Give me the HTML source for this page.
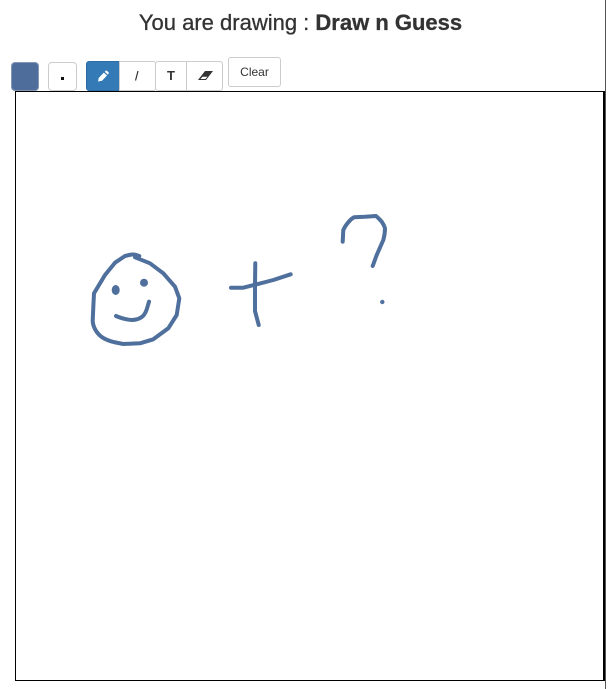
<!DOCTYPE html>
<html>
<head>
<meta charset="utf-8">
<style>
html,body{margin:0;padding:0;background:#fff}
body{position:relative;width:611px;height:689px;overflow:hidden;font-family:"Liberation Sans",sans-serif;color:#333}
h1{position:absolute;left:0;top:10px;width:601px;margin:0;text-align:center;font-size:22px;line-height:26px;font-weight:400;color:#333;white-space:nowrap;-webkit-text-stroke:0.3px #333}
.b{position:absolute;box-sizing:border-box;background:#fff;border:1px solid #ccc;text-align:center;font-size:12px;color:#333}
#canvas{position:absolute;left:15px;top:91px;width:590px;height:590px;box-sizing:border-box;border:1px solid #000;border-right-width:2px}
#edge{position:absolute;left:605px;top:0;width:1px;height:689px;background:#555}
svg{position:absolute;left:0;top:0}
</style>
</head>
<body>
<h1>You are drawing : <b>Draw n Guess</b></h1>

<div class="b" style="left:11px;top:62px;width:28px;height:29px;background:#4f6d9b;border-color:#8497b5;border-radius:4px"></div>
<div class="b" style="left:48px;top:62px;width:29px;height:29px;border-radius:4px"></div>
<div class="b" style="left:86px;top:61px;width:34px;height:30px;background:#337ab7;border-color:#2e6da4;border-radius:3px 0 0 3px"></div>
<div class="b" style="left:119px;top:61px;width:37px;height:30px;border-radius:0 3px 3px 0"></div>
<div class="b" style="left:155px;top:61px;width:32px;height:30px;border-radius:3px 0 0 3px;line-height:28px;font-size:13px;font-weight:700">T</div>
<div class="b" style="left:186px;top:61px;width:37px;height:30px;border-radius:0 3px 3px 0"></div>
<div class="b" style="left:228px;top:57px;width:53px;height:30px;border-radius:3px;line-height:28px">Clear</div>

<div id="canvas"></div>
<div id="edge"></div>

<svg width="611" height="689" viewBox="0 0 611 689">
  <rect x="61" y="77" width="3" height="3" fill="#111"/>
  <path d="M135.500 80.500L138 71" fill="none" stroke="#333" stroke-width="1.200"/>
  <path d="M98 81.500L102 80.800L107 75.500L103.800 72.600L98.700 78Z M104.700 71.800L107.800 74.600L108.800 73.400C109.200 72.600 106.800 70.200 105.800 70.600Z" fill="#fff"/>
  <path d="M198 80L205 71L213 71L206 80Z" fill="#333"/>
  <path d="M200.500 79L202.500 76.800L207.400 76.800L205.400 79Z" fill="#fff"/>
  <g fill="none" stroke="#4f6f9c" stroke-width="4" stroke-linecap="round" stroke-linejoin="round">
    <path d="M139.300 256L136.300 255Q133.300 254 129.200 255L125 256L115 262.700L105 275L94 293.300L93.400 305L92.700 320.900Q92.700 325 95.500 330Q98.300 335 103.300 338Q108.300 341 115.800 342.500L123.300 344L140 343.300L153.300 339.300L168.300 328.300L176.700 315L179.300 298.300L175 286.700L163.300 273.300L150 263.300L135 257.300"/>
    <path d="M116 316Q121.700 318.500 126.700 319.300Q131.700 320.500 136 319.500Q140 318.700 143 316Q145.700 313.300 147.300 307.500L149 301.700"/>
    <path d="M255.300 263.300L255 285L255 311L258.700 325"/>
    <path d="M231 287.700L243.300 287.700Q250 286 256.700 284.300Q265 282.200 273.300 280L290.700 274.300"/>
    <path d="M342.700 241.700L343.300 230Q345 226 348.300 222.300Q351 219 354 217.300Q359 216.900 365 216.700L376 216Q379 218.500 381.700 221.700Q384 225 385 228.300Q385 234 383.300 240Q380 247.500 376.700 255L372.700 266"/>
  </g>
  <g fill="#4f6f9c">
    <ellipse cx="115.700" cy="290" rx="4" ry="5"/>
    <circle cx="144" cy="282.700" r="4"/>
    <circle cx="382.300" cy="302" r="2.200"/>
  </g>
</svg>
</body>
</html>
